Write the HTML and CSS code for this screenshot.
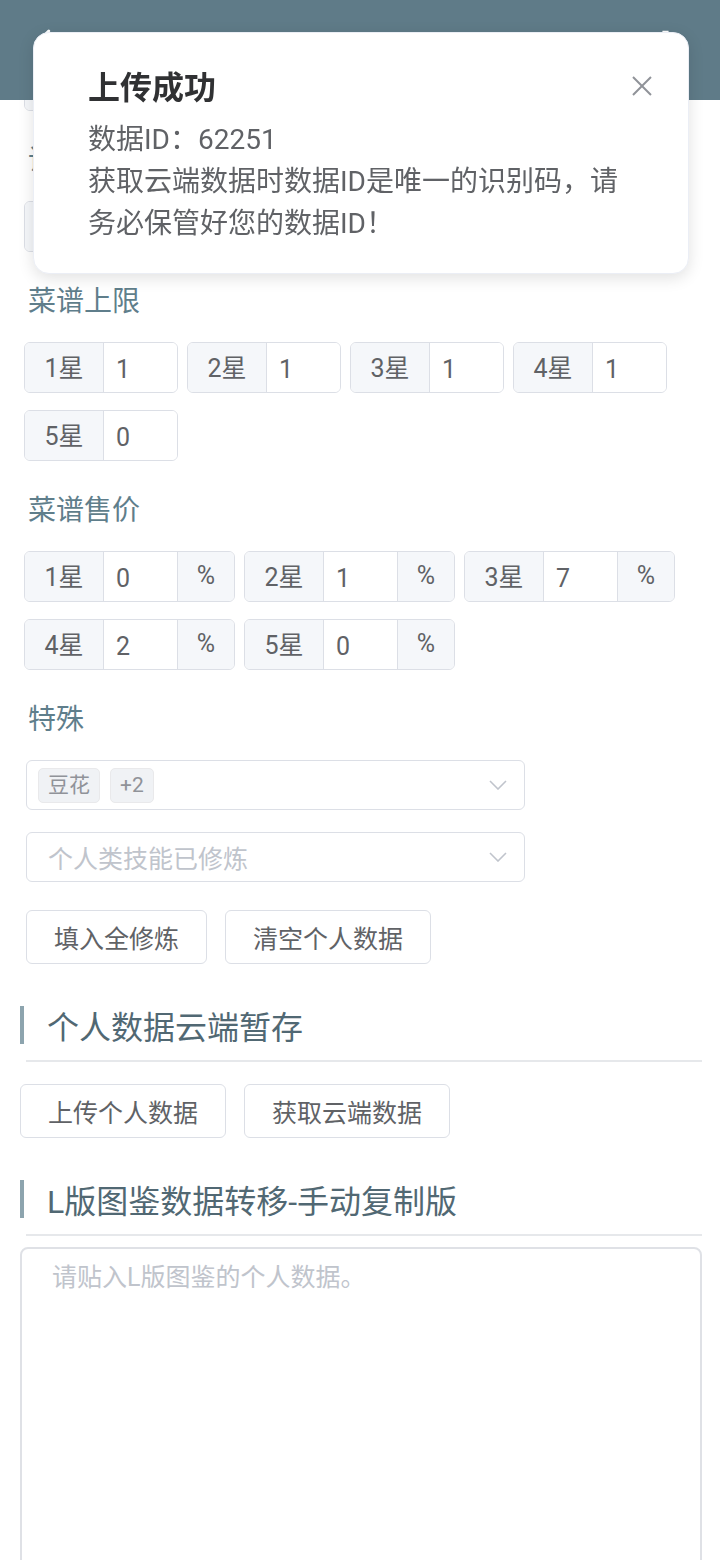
FILE: index.html
```html
<!DOCTYPE html>
<html lang="zh-CN">
<head>
<meta charset="utf-8">
<meta name="viewport" content="width=720">
<title>个人数据</title>
<link rel="stylesheet" href="styles.css">
</head>
<body>
<header class="topbar">
  <svg class="top-icon" viewBox="0 0 24 24" width="30" height="30" aria-hidden="true"><path d="M15 4 L7 12 L15 20" fill="none" stroke="#fff" stroke-width="2.4" stroke-linecap="round" stroke-linejoin="round"/></svg>
  <svg class="top-icon" viewBox="0 0 24 24" width="36" height="36" aria-hidden="true"><path fill="#fff" d="M19.4 13a7.5 7.5 0 0 0 0-2l2.1-1.6-2-3.5-2.5 1a7.6 7.6 0 0 0-1.7-1L15 3.2h-4l-.4 2.7a7.6 7.6 0 0 0-1.7 1l-2.5-1-2 3.5L6.6 11a7.5 7.5 0 0 0 0 2l-2.1 1.6 2 3.5 2.5-1a7.6 7.6 0 0 0 1.7 1l.4 2.7h4l.4-2.7a7.6 7.6 0 0 0 1.7-1l2.5 1 2-3.5zM13 15.5A3.5 3.5 0 1 1 13 8.5a3.5 3.5 0 0 1 0 7z"/></svg>
</header>

<main class="page">
  <div class="form">
    <div class="groups">
      <div class="group"><span class="pre">1星</span><input class="val" value="0"></div>
      <div class="group"><span class="pre">2星</span><input class="val" value="0"></div>
    </div>

    <div class="label">调料加成</div>
    <div class="groups">
      <div class="group"><span class="pre">1星</span><input class="val" value="0"></div>
      <div class="group"><span class="pre">2星</span><input class="val" value="0"></div>
    </div>

    <div class="label">菜谱上限</div>
    <div class="groups">
      <div class="group"><span class="pre">1星</span><input class="val" value="1"></div>
      <div class="group"><span class="pre">2星</span><input class="val" value="1"></div>
      <div class="group"><span class="pre">3星</span><input class="val" value="1"></div>
      <div class="group"><span class="pre">4星</span><input class="val" value="1"></div>
      <div class="group"><span class="pre">5星</span><input class="val" value="0"></div>
    </div>

    <div class="label">菜谱售价</div>
    <div class="groups">
      <div class="group wide"><span class="pre">1星</span><input class="val" value="0"><span class="app">%</span></div>
      <div class="group wide"><span class="pre">2星</span><input class="val" value="1"><span class="app">%</span></div>
      <div class="group wide"><span class="pre">3星</span><input class="val" value="7"><span class="app">%</span></div>
      <div class="group wide"><span class="pre">4星</span><input class="val" value="2"><span class="app">%</span></div>
      <div class="group wide"><span class="pre">5星</span><input class="val" value="0"><span class="app">%</span></div>
    </div>

    <div class="label">特殊</div>
    <div class="selects">
      <div class="select">
        <span class="tag">豆花</span><span class="tag">+2</span>
        <svg class="chev" viewBox="0 0 18 10" width="18" height="10" aria-hidden="true"><path d="M1 1 L9 9 L17 1" fill="none" stroke="#c0c4cc" stroke-width="1.6"/></svg>
      </div>
      <div class="select">
        <span class="ph">个人类技能已修炼</span>
        <svg class="chev" viewBox="0 0 18 10" width="18" height="10" aria-hidden="true"><path d="M1 1 L9 9 L17 1" fill="none" stroke="#c0c4cc" stroke-width="1.6"/></svg>
      </div>
      <div class="btn-row">
        <button class="btn">填入全修炼</button>
        <button class="btn">清空个人数据</button>
      </div>
    </div>
  </div>

  <section class="cloud">
    <h2 class="sec-title">个人数据云端暂存</h2>
    <div class="divider"></div>
    <div class="btn-row">
      <button class="btn">上传个人数据</button>
      <button class="btn">获取云端数据</button>
    </div>

    <h2 class="sec-title">L版图鉴数据转移-手动复制版</h2>
    <div class="divider"></div>
    <textarea class="paste" placeholder="请贴入L版图鉴的个人数据。"></textarea>
  </section>
</main>

<div class="notify" role="alert">
  <div class="notify-body">
    <h2 class="notify-title">上传成功</h2>
    <div class="notify-text">
      <p>数据ID：62251</p>
      <p>获取云端数据时数据ID是唯一的识别码，请务必保管好您的数据ID！</p>
    </div>
  </div>
  <svg class="close" viewBox="0 0 20 20" width="20" height="20" aria-hidden="true"><path d="M1 1 L19 19 M19 1 L1 19" fill="none" stroke="#909399" stroke-width="2"/></svg>
</div>
</body>
</html>
```

FILE: styles.css
```css
* { box-sizing: border-box; }

html, body {
  margin: 0;
  padding: 0;
  background: #ffffff;
}

body {
  font-family: "Roboto", "Noto Sans CJK SC", sans-serif;
  color: #606266;
  width: 720px;
  overflow: hidden;
}

.topbar {
  position: fixed;
  top: 0;
  left: 0;
  right: 0;
  height: 100px;
  background: #5f7b88;
  display: flex;
  justify-content: space-between;
  align-items: flex-start;
  padding: 26px 38px 0 30px;
  z-index: 5;
}

.page {
  padding-top: 60px;
}

.form {
  padding: 0 18px 0 24px;
}

.groups {
  display: flex;
  flex-wrap: wrap;
  gap: 17px 9px;
}

.group {
  display: flex;
  width: 154px;
  height: 51px;
  border: 1px solid #dcdfe6;
  border-radius: 6px;
  overflow: hidden;
  font-size: 25px;
}

.group.wide { width: 211px; }

.pre,
.app {
  display: flex;
  align-items: center;
  justify-content: center;
  background: #f5f7fa;
  color: #606266;
}

.pre {
  flex: 0 0 79px;
  border-right: 1px solid #dcdfe6;
  padding-bottom: 3px;
}

.app {
  flex: 0 0 57px;
  border-left: 1px solid #dcdfe6;
  padding-bottom: 2px;
}

.val {
  flex: 1 1 auto;
  min-width: 0;
  width: 10px;
  border: none;
  outline: none;
  background: #fff;
  padding: 3px 12px 0;
  font: inherit;
  color: #606266;
}

.label {
  height: 40px;
  line-height: 40px;
  margin: 30px 0 20px 4px;
  font-size: 28px;
  color: #5f7e8b;
}

.selects {
  padding-left: 2px;
}

.select {
  display: flex;
  align-items: center;
  width: 499px;
  height: 50px;
  border: 1px solid #dcdfe6;
  border-radius: 6px;
  padding: 0 17px 0 11px;
  margin-top: 2px;
  gap: 10px;
}

.select + .select { margin-top: 22px; }

.tag {
  height: 35px;
  line-height: 33px;
  padding: 0 9px;
  background: #f0f2f5;
  border: 1px solid #e9e9eb;
  border-radius: 5px;
  font-size: 21px;
  color: #909399;
}

.ph {
  padding-left: 10px;
  font-size: 25px;
  color: #c0c4cc;
}

.chev { margin-left: auto; }

.btn-row {
  display: flex;
  gap: 18px;
  margin-top: 28px;
}

.btn {
  height: 54px;
  padding: 0 27px;
  border: 1px solid #dcdfe6;
  border-radius: 6px;
  background: #fff;
  font-family: inherit;
  font-size: 25px;
  color: #606266;
}

.cloud {
  padding: 0 18px 0 20px;
}

.sec-title {
  margin: 42px 0 0;
  height: 38px;
  display: flex;
  align-items: center;
  border-left: 4px solid #8da4ae;
  padding-left: 23px;
  font-size: 32px;
  font-weight: normal;
  color: #516873;
}

.divider {
  height: 2px;
  background: #e6e8eb;
  margin: 16px 0 0 6px;
}

.cloud .btn-row { margin-top: 22px; }

.paste {
  display: block;
  width: 100%;
  height: 420px;
  margin-top: 11px;
  border: 2px solid #dfe1e6;
  border-radius: 8px;
  padding: 10px 30px;
  font-family: inherit;
  font-size: 25px;
  line-height: 38px;
  color: #606266;
  resize: none;
  outline: none;
}

.paste::placeholder { color: #c0c4cc; }

.notify {
  position: fixed;
  top: 32px;
  left: 33px;
  width: 656px;
  background: #fff;
  border: 1px solid #ebeef5;
  border-radius: 16px;
  box-shadow: 0 4px 16px rgba(0, 0, 0, 0.12);
  display: flex;
  align-items: flex-start;
  padding: 33px 36px 28px 54px;
  z-index: 10;
}

.notify-body {
  width: 545px;
}

.notify-title {
  margin: 0;
  height: 44px;
  line-height: 44px;
  font-size: 32px;
  font-weight: bold;
  color: #303133;
}

.notify-text {
  margin-top: 9px;
  font-size: 28px;
  line-height: 42px;
  color: #606266;
}

.notify-text p { margin: 0; }

.close {
  margin-left: auto;
  margin-top: 10px;
}
```
